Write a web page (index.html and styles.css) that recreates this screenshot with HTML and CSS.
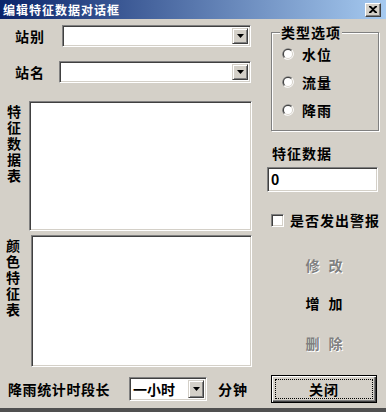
FILE: index.html
```html
<!DOCTYPE html>
<html lang="zh">
<head>
<meta charset="utf-8">
<link rel="stylesheet" href="styles.css">
</head>
<body>
<div class="titlebar">
  <span class="title">编辑特征数据对话框</span>
  <span class="tclose"><svg width="8" height="7" viewBox="0 0 8 7"><path d="M0 0h2l2 2 2-2h2v1L5 3.5 8 6v1H6L4 5 2 7H0V6l3-2.5L0 1z" fill="#000"/></svg></span>
</div>
<div class="client">
  <div class="left">
    <div class="row r1">
      <span class="lbl lbl1">站别</span>
      <div class="combo c1"><span class="ctext"></span><span class="dd"><svg width="7" height="4" viewBox="0 0 7 4"><path d="M0 0h7L3.5 4z" fill="#000"/></svg></span></div>
    </div>
    <div class="row r2">
      <span class="lbl lbl2">站名</span>
      <div class="combo c2"><span class="ctext"></span><span class="dd"><svg width="7" height="4" viewBox="0 0 7 4"><path d="M0 0h7L3.5 4z" fill="#000"/></svg></span></div>
    </div>
    <div class="listrow l1">
      <div class="vlbl v1">特征数据表</div>
      <div class="listbox lb1"></div>
    </div>
    <div class="listrow l2">
      <div class="vlbl v2">颜色特征表</div>
      <div class="listbox lb2"></div>
    </div>
  </div>
  <div class="right">
    <fieldset class="group">
      <legend class="legend">类型选项</legend>
      <div class="radio"><svg class="rb" width="12" height="12" viewBox="0 0 12 12"><path d="M10.24 1.76A6 6 0 0 0 1.76 10.24z" fill="#808080"/><path d="M10.24 1.76A6 6 0 0 1 1.76 10.24z" fill="#fff"/><path d="M9.54 2.46A5 5 0 0 0 2.46 9.54z" fill="#404040"/><path d="M9.54 2.46A5 5 0 0 1 2.46 9.54z" fill="#D4D0C8"/><circle cx="6" cy="6" r="4" fill="#fff"/></svg><span>水位</span></div>
      <div class="radio"><svg class="rb" width="12" height="12" viewBox="0 0 12 12"><path d="M10.24 1.76A6 6 0 0 0 1.76 10.24z" fill="#808080"/><path d="M10.24 1.76A6 6 0 0 1 1.76 10.24z" fill="#fff"/><path d="M9.54 2.46A5 5 0 0 0 2.46 9.54z" fill="#404040"/><path d="M9.54 2.46A5 5 0 0 1 2.46 9.54z" fill="#D4D0C8"/><circle cx="6" cy="6" r="4" fill="#fff"/></svg><span>流量</span></div>
      <div class="radio"><svg class="rb" width="12" height="12" viewBox="0 0 12 12"><path d="M10.24 1.76A6 6 0 0 0 1.76 10.24z" fill="#808080"/><path d="M10.24 1.76A6 6 0 0 1 1.76 10.24z" fill="#fff"/><path d="M9.54 2.46A5 5 0 0 0 2.46 9.54z" fill="#404040"/><path d="M9.54 2.46A5 5 0 0 1 2.46 9.54z" fill="#D4D0C8"/><circle cx="6" cy="6" r="4" fill="#fff"/></svg><span>降雨</span></div>
    </fieldset>
    <div class="flabel">特征数据</div>
    <div class="edit">0</div>
    <div class="check"><span class="cb"></span><span>是否发出警报</span></div>
    <div class="fbtn b1 disabled"><span>修</span><span>改</span></div>
    <div class="fbtn b2"><span>增</span><span>加</span></div>
    <div class="fbtn b3 disabled"><span>删</span><span>除</span></div>
  </div>
</div>
<div class="bottom">
  <span class="blbl">降雨统计时段长</span>
  <div class="combo c3"><span class="ctext">一小时</span><span class="dd"><svg width="7" height="4" viewBox="0 0 7 4"><path d="M0 0h7L3.5 4z" fill="#000"/></svg></span></div>
  <span class="unit">分钟</span>
  <div class="defbtn"><span class="focus">关闭</span></div>
</div>
<div class="edge"></div>
</body>
</html>
```
FILE: styles.css
```css
* { box-sizing: border-box; }
html, body { margin: 0; padding: 0; }
body {
  width: 386px;
  height: 412px;
  overflow: hidden;
  background: #D4D0C8;
  font-family: "Noto Sans CJK SC", "Noto Sans CJK JP", sans-serif;
  font-weight: 700;
  font-size: 14px;
  line-height: 16px;
  color: #000;
}
.titlebar {
  height: 19px;
  background: linear-gradient(to right, #0A246A, #A6CAF0);
  display: flex;
  align-items: center;
  justify-content: space-between;
  padding: 0 5px 0 3px;
}
.title {
  color: #fff;
  font-size: 12px;
  letter-spacing: 1px;
  line-height: 18px;
}
.tclose {
  width: 16px;
  height: 14px;
  background: #D4D0C8;
  border: 1px solid;
  border-color: #fff #404040 #404040 #fff;
  box-shadow: inset -1px -1px 0 #808080;
  display: flex;
  align-items: center;
  justify-content: center;
}
.client {
  display: flex;
  height: 356px;
}
.left { width: 260px; }
.right { width: 126px; }
.row {
  display: flex;
  align-items: center;
  height: 22px;
  padding-left: 15px;
}
.r1 { margin-top: 6px; }
.r2 { margin-top: 14px; }
.lbl { letter-spacing: 1px; }
.lbl1 { width: 47px; }
.lbl2 { width: 44px; }
.combo {
  display: flex;
  align-items: stretch;
  height: 22px;
  background: #fff;
  border: 1px solid;
  border-color: #808080 #fff #fff #808080;
  box-shadow: inset 1px 1px 0 #404040, inset -1px -1px 0 #D4D0C8;
  padding: 2px;
}
.c1 { width: 189px; }
.c2 { width: 192px; }
.ctext { flex: 1; padding-left: 1px; line-height: 18px; }
.dd {
  width: 16px;
  background: #D4D0C8;
  border: 1px solid;
  border-color: #D4D0C8 #404040 #404040 #D4D0C8;
  box-shadow: inset 1px 1px 0 #fff, inset -1px -1px 0 #808080;
  display: flex;
  align-items: center;
  justify-content: center;
}
.listrow { display: flex; }
.l1 { margin-top: 18px; height: 130px; padding-left: 7px; }
.l2 { margin-top: 4px; height: 132px; padding-left: 6px; }
.vlbl {
  writing-mode: vertical-rl;
  letter-spacing: 2px;
  line-height: 14px;
  width: 14px;
  padding-top: 4px;
}
.v1 { margin-right: 8px; }
.v2 { margin-right: 11px; }
.listbox {
  background: #fff;
  border: 1px solid;
  border-color: #808080 #fff #fff #808080;
  box-shadow: inset 1px 1px 0 #404040, inset -1px -1px 0 #D4D0C8;
}
.lb1 { width: 223px; }
.lb2 { width: 221px; }
.group {
  margin: 5px 0 0 11px;
  width: 108px;
  height: 107px;
  padding: 0 0 0 10px;
  border: 1px solid #808080;
  box-shadow: 1px 1px 0 #fff, inset 1px 1px 0 #fff;
}
.legend {
  margin-left: -2px;
  padding: 0 1px;
  background: #D4D0C8;
  letter-spacing: 1px;
  line-height: 16px;
}
.radio {
  display: flex;
  align-items: center;
  height: 28px;
  gap: 8px;
  letter-spacing: 1px;
}
.rb { flex: none; }
.flabel {
  margin-top: 14px;
  padding-left: 12px;
  letter-spacing: 1px;
}
.edit {
  margin: 6px 0 0 7px;
  width: 111px;
  height: 25px;
  background: #fff;
  border: 1px solid;
  border-color: #808080 #fff #fff #808080;
  box-shadow: inset 1px 1px 0 #404040, inset -1px -1px 0 #D4D0C8;
  padding: 2px 3px;
  line-height: 19px;
}
.check {
  display: flex;
  align-items: center;
  height: 16px;
  margin: 20px 0 0 11px;
  gap: 6px;
  letter-spacing: 1px;
}
.cb {
  width: 13px;
  height: 13px;
  background: #fff;
  border: 1px solid;
  border-color: #808080 #fff #fff #808080;
  box-shadow: inset 1px 1px 0 #404040, inset -1px -1px 0 #D4D0C8;
}
.fbtn {
  display: flex;
  align-items: center;
  justify-content: center;
  gap: 9px;
  width: 106px;
  height: 28px;
  margin-left: 11px;
}
.b1 { margin-top: 23px; }
.b2 { margin-top: 10px; }
.b3 { margin-top: 12px; }
.disabled {
  color: #808080;
  text-shadow: 1px 1px 0 #fff;
}
.bottom {
  display: flex;
  align-items: center;
  height: 28px;
}
.blbl {
  width: 129px;
  padding-left: 8px;
  letter-spacing: 0.6px;
}
.c3 { width: 78px; height: 24px; }
.c3 .ctext { line-height: 18px; }
.unit {
  margin-left: 11px;
  letter-spacing: 1px;
}
.defbtn {
  margin-left: auto;
  margin-right: 9px;
  width: 106px;
  height: 28px;
  border: 1px solid #000;
  background: #D4D0C8;
  box-shadow: inset 1px 1px 0 #fff, inset -1px -1px 0 #404040, inset -2px -2px 0 #808080;
  padding: 3px;
  display: flex;
}
.focus {
  flex: 1;
  border: 1px dotted #000;
  display: flex;
  align-items: center;
  justify-content: center;
  letter-spacing: 1px;
}
.edge {
  margin-top: 5px;
  height: 4px;
  background: #505050;
}
```
